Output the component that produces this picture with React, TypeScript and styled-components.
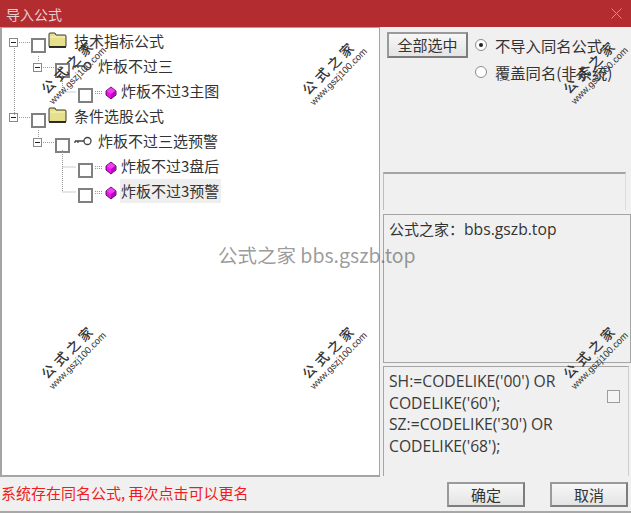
import React from 'react';
import styled, { createGlobalStyle } from 'styled-components';

const GlobalStyle = createGlobalStyle`
  html, body {
    margin: 0;
    padding: 0;
    background: #f0f0f0;
  }
`;

const FONT = `"Noto Sans CJK SC", "Open Sans", sans-serif`;

const Dialog = styled.div`
  position: relative;
  width: 631px;
  height: 513px;
  display: flex;
  flex-direction: column;
  overflow: hidden;
  background: #f0f0f0;
  font-family: "Open Sans", "Noto Sans CJK SC", sans-serif;
  color: #3a3a3a;
  box-sizing: border-box;
  border-bottom: 2px solid #a8a8a8;
`;

const TitleBar = styled.div`
  height: 27px;
  flex: none;
  display: flex;
  align-items: center;
  justify-content: space-between;
  padding: 0 9px 0 6px;
  background: #b32c30;
  color: #e9cfd0;
  font-family: ${FONT};
  font-size: 14px;
`;

const Body = styled.div`
  flex: none;
  height: 450px;
  display: flex;
`;

const TreePanel = styled.div`
  position: relative;
  width: 380px;
  flex: none;
  box-sizing: border-box;
  padding: 2px 0 0 7px;
  background: #fff;
  border-left: 2px solid #a5a5a5;
  border-top: 1px solid #a5a5a5;
  border-right: 1px solid #a5a5a5;
  border-bottom: 2px solid #a5a5a5;
`;

const TreeRow = styled.div<{ $level: number }>`
  height: 25px;
  display: flex;
  align-items: center;
  padding-left: ${p => [0, 24, 69][p.$level]}px;
  font-family: ${FONT};
  font-size: 15px;
  color: #333;
`;

const Expander = styled.span`
  width: 9px;
  height: 9px;
  flex: none;
  box-sizing: border-box;
  border: 1px solid #8a8a8a;
  background: #fff;
  display: flex;
  align-items: center;
  justify-content: center;
  margin-right: 13px;
  &::before {
    content: '';
    width: 5px;
    height: 1px;
    background: #222;
  }
`;

const NodeCheck = styled.span`
  width: 15px;
  height: 15px;
  flex: none;
  box-sizing: border-box;
  border: 2px solid #808080;
  background: #fff;
  margin-top: 6px;
`;

const IconSlot = styled.span<{ $w: number; $ml: number; $lift: number }>`
  width: ${p => p.$w}px;
  margin-left: ${p => p.$ml}px;
  margin-bottom: ${p => p.$lift}px;
  flex: none;
  display: flex;
  align-items: center;
`;

const NodeLabel = styled.span<{ $ml: number; $selected?: boolean }>`
  margin-left: ${p => p.$ml}px;
  margin-bottom: 3px;
  padding: 0 2px 0 1px;
  line-height: 24px;
  white-space: nowrap;
  background: ${p => (p.$selected ? '#eeeeee' : 'transparent')};
`;

const Connectors = styled.svg`
  position: absolute;
  left: 0;
  top: 0;
  pointer-events: none;
`;

const RightColumn = styled.div`
  flex: 1;
  min-width: 0;
  display: flex;
  flex-direction: column;
  padding-left: 3px;
`;

const OptionsArea = styled.div`
  height: 145px;
  flex: none;
  display: flex;
  align-items: flex-start;
  gap: 7px;
  padding: 5px 0 0 4px;
  box-sizing: border-box;
`;

const DialogButton = styled.button<{ $w: number; $h: number }>`
  width: ${p => p.$w}px;
  height: ${p => p.$h}px;
  padding: 0;
  flex: none;
  box-sizing: border-box;
  border: 2px solid #7d7d7d;
  border-top-color: #9a9a9a;
  border-left-color: #9a9a9a;
  background: linear-gradient(#f7f7f7, #e4e4e4);
  font-family: ${FONT};
  font-size: 15px;
  line-height: 20px;
  color: #333;
`;

const RadioGroup = styled.div`
  display: flex;
  flex-direction: column;
  gap: 2px;
`;

const RadioRow = styled.label`
  height: 25px;
  display: flex;
  align-items: center;
  gap: 8px;
  font-family: ${FONT};
  font-size: 15.3px;
  line-height: 20px;
  white-space: nowrap;
  color: #333;
`;

const RadioDot = styled.span<{ $on?: boolean }>`
  width: 12px;
  height: 12px;
  flex: none;
  box-sizing: border-box;
  border-radius: 50%;
  border: 1px solid #8c8c8c;
  background: #fff;
  display: flex;
  align-items: center;
  justify-content: center;
  &::before {
    content: '';
    width: 4px;
    height: 4px;
    border-radius: 50%;
    background: ${p => (p.$on ? '#222' : 'transparent')};
  }
`;

const EmptyBox = styled.div`
  height: 38px;
  width: 243px;
  flex: none;
  box-sizing: border-box;
  border-top: 2px solid #a5a5a5;
  border-left: 1px solid #bdbdbd;
  border-right: 1px solid #dcdcdc;
`;

const InfoBox = styled.div`
  height: 149px;
  margin-top: 4px;
  flex: none;
  box-sizing: border-box;
  padding: 3px 5px;
  border: 1px solid #a5a5a5;
  font-family: ${FONT};
  font-size: 15px;
  line-height: 22px;
  color: #333;
`;

const LatinRun = styled.span`
  font-family: "Open Sans", sans-serif;
  font-size: 15.7px;
`;

const CodeBox = styled.div`
  height: 110px;
  margin-top: 3px;
  margin-right: 2px;
  flex: none;
  box-sizing: border-box;
  display: flex;
  justify-content: space-between;
  padding: 4px 8px 0 5px;
  border: 1px solid #a5a5a5;
  border-bottom: none;
  border-right-color: #cfcfcf;
`;

const CodeText = styled.div`
  font-size: 15.7px;
  line-height: 21.6px;
  width: 205px;
  color: #3a3a3a;
`;

const SmallCheck = styled.span`
  width: 13px;
  height: 13px;
  margin-top: 19px;
  flex: none;
  box-sizing: border-box;
  border: 1px solid #9c9c9c;
  background: #f4f4f4;
`;

const Footer = styled.div`
  flex: 1;
  display: flex;
  align-items: flex-start;
  padding: 5px 3px 0 1px;
  gap: 25px;
`;

const Warning = styled.div`
  flex: 1;
  font-family: ${FONT};
  font-size: 15px;
  line-height: 22px;
  color: #f01c20;
  white-space: nowrap;
`;

const StampLayer = styled.div`
  position: absolute;
  left: 0;
  top: 0;
  width: 631px;
  height: 513px;
  pointer-events: none;
`;

const Stamp = styled.div<{ $x: number; $y: number }>`
  position: absolute;
  left: ${p => p.$x}px;
  top: ${p => p.$y}px;
  width: 84px;
  display: flex;
  flex-direction: column;
  align-items: center;
  transform: translate(-50%, -50%) rotate(-45deg);
  color: #333;
`;

const StampTitle = styled.span`
  font-family: "Noto Sans CJK SC", sans-serif;
  font-weight: 500;
  font-size: 13.5px;
  line-height: 15px;
  letter-spacing: 4px;
  white-space: nowrap;
`;

const StampUrl = styled.span`
  font-family: "Liberation Sans", sans-serif;
  font-size: 9.5px;
  line-height: 11px;
  white-space: nowrap;
`;

const CenterMark = styled.div`
  position: absolute;
  left: 218px;
  top: 241px;
  font-family: "Noto Sans CJK SC", "Open Sans", sans-serif;
  font-size: 19.5px;
  line-height: 28px;
  color: rgba(90, 90, 90, 0.62);
  white-space: nowrap;
`;

const Folder = () => (
  <svg width="19" height="16" viewBox="0 0 19 16">
    <path d="M1 4 L1 14 Q1 15 2 15 L17 15 Q18 15 18 14 L18 4 Q18 3 17 3 L8 3 L7 1 L2 1 Q1 1 1 2 Z" fill="#e6e08c" stroke="#3a3a2a" strokeWidth="1" />
    <path d="M2 5 H17" stroke="#f7f3c0" strokeWidth="1" />
    <path d="M1 15 H18" stroke="#111" strokeWidth="1.6" />
  </svg>
);

const KeyIcon = () => (
  <svg width="18" height="10" viewBox="0 0 18 10">
    <circle cx="13.5" cy="5" r="3.5" fill="#fff" stroke="#444" strokeWidth="1.3" />
    <path d="M10 5 H1 M1 5 V7 M4 5 V7" stroke="#444" strokeWidth="1.3" fill="none" />
  </svg>
);

const Gem = () => (
  <svg width="12" height="14" viewBox="0 0 12 14">
    <path d="M6 1 L11 5 L11 9 L6 13 L1 9 L1 5 Z" fill="#ee10ee" stroke="#3c1046" strokeWidth="0.9" />
    <path d="M6 1.5 L1.5 5 L6 8 L10.5 5 Z" fill="#f43cf4" />
    <path d="M6 8 V12.5 L10.5 9 V5 Z" fill="#b800c0" />
  </svg>
);

const CloseIcon = () => (
  <svg width="11" height="11" viewBox="0 0 11 11">
    <path d="M0.5 0.5 L10.5 10.5 M10.5 0.5 L0.5 10.5" stroke="#d98a8c" strokeWidth="1" />
  </svg>
);

const DOTTED = { stroke: '#9a9a9a', strokeWidth: 1, strokeDasharray: '1 1', fill: 'none' };

const TreeLines = () => (
  <Connectors width="377" height="200">
    <path d="M12.5 20 V87" {...DOTTED} />
    <path d="M17 14.5 H28" {...DOTTED} />
    <path d="M17 89.5 H28" {...DOTTED} />
    <path d="M36.5 28 V34 M36.5 102 V109" {...DOTTED} />
    <path d="M41 39.5 H52 M41 114.5 H52" {...DOTTED} />
    <path d="M60.5 47 V64 H74" {...DOTTED} />
    <path d="M60.5 122 V164 H74 M60.5 139 H74" {...DOTTED} />
    <path d="M93 63.5 H101 M93 65.5 H101 M93 138.5 H101 M93 140.5 H101 M93 163.5 H101 M93 165.5 H101" {...DOTTED} />
  </Connectors>
);

interface LeafProps {
  label: string;
  selected?: boolean;
}

const Leaf = ({ label, selected }: LeafProps) => (
  <TreeRow $level={2}>
    <NodeCheck />
    <IconSlot $w={12} $ml={12} $lift={0}><Gem /></IconSlot>
    <NodeLabel $ml={3} $selected={selected}>{label}</NodeLabel>
  </TreeRow>
);

const stamps = [
  [72, 70], [333, 71], [594, 70],
  [72, 355], [333, 355], [594, 355],
];

const App = () => (
  <Dialog>
    <GlobalStyle />
    <TitleBar>
      <span>导入公式</span>
      <CloseIcon />
    </TitleBar>
    <Body>
      <TreePanel>
        <TreeLines />
        <TreeRow $level={0}>
          <Expander />
          <NodeCheck />
          <IconSlot $w={19} $ml={2} $lift={6}><Folder /></IconSlot>
          <NodeLabel $ml={6}>技术指标公式</NodeLabel>
        </TreeRow>
        <TreeRow $level={1}>
          <Expander />
          <NodeCheck />
          <IconSlot $w={18} $ml={4} $lift={3}><KeyIcon /></IconSlot>
          <NodeLabel $ml={5}>炸板不过三</NodeLabel>
        </TreeRow>
        <Leaf label="炸板不过3主图" />
        <TreeRow $level={0}>
          <Expander />
          <NodeCheck />
          <IconSlot $w={19} $ml={2} $lift={6}><Folder /></IconSlot>
          <NodeLabel $ml={6}>条件选股公式</NodeLabel>
        </TreeRow>
        <TreeRow $level={1}>
          <Expander />
          <NodeCheck />
          <IconSlot $w={18} $ml={4} $lift={3}><KeyIcon /></IconSlot>
          <NodeLabel $ml={5}>炸板不过三选预警</NodeLabel>
        </TreeRow>
        <Leaf label="炸板不过3盘后" />
        <Leaf label="炸板不过3预警" selected />
      </TreePanel>
      <RightColumn>
        <OptionsArea>
          <DialogButton $w={81} $h={26}>全部选中</DialogButton>
          <RadioGroup>
            <RadioRow><RadioDot $on />不导入同名公式</RadioRow>
            <RadioRow><RadioDot />覆盖同名(非系统)</RadioRow>
          </RadioGroup>
        </OptionsArea>
        <EmptyBox />
        <InfoBox>公式之家：<LatinRun>bbs.gszb.top</LatinRun></InfoBox>
        <CodeBox>
          <CodeText>
            SH:=CODELIKE('00') OR CODELIKE('60');<br />
            SZ:=CODELIKE('30') OR CODELIKE('68');
          </CodeText>
          <SmallCheck />
        </CodeBox>
      </RightColumn>
    </Body>
    <Footer>
      <Warning>系统存在同名公式, 再次点击可以更名</Warning>
      <DialogButton $w={78} $h={25}>确定</DialogButton>
      <DialogButton $w={78} $h={25}>取消</DialogButton>
    </Footer>
    <StampLayer>
      {stamps.map(([x, y]) => (
        <Stamp key={`${x}-${y}`} $x={x} $y={y}>
          <StampTitle>公式之家</StampTitle>
          <StampUrl>www.gszj100.com</StampUrl>
        </Stamp>
      ))}
      <CenterMark>公式之家 bbs.gszb.top</CenterMark>
    </StampLayer>
  </Dialog>
);

export default App;
